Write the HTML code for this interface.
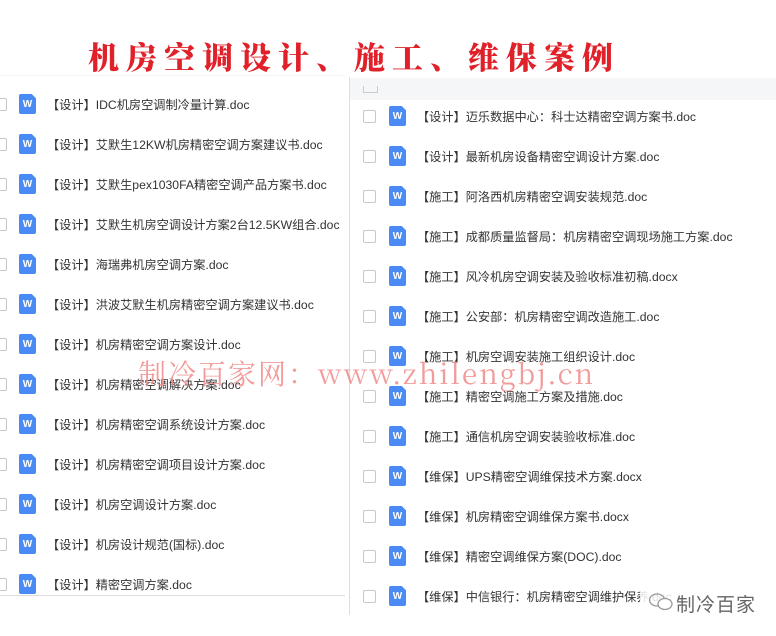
<!DOCTYPE html>
<html><head><meta charset="utf-8"><style>
body{margin:0;width:776px;height:636px;background:#fff;position:relative;overflow:hidden;font-family:"Liberation Sans","Noto Sans CJK SC",sans-serif;}
.title{position:absolute;left:88px;top:33px;font-family:"Noto Serif CJK SC","Liberation Serif",serif;font-weight:900;font-size:31px;color:#e0212a;letter-spacing:7px;white-space:nowrap;}
.row{position:absolute;height:24px;display:flex;align-items:center;font-size:12.2px;color:#333;white-space:nowrap;}
.cb{width:13px;height:13px;border:1px solid #c8c8c8;border-radius:2px;background:#fff;box-sizing:border-box;}
.ic{width:17px;height:20px;background:#4a8af4;border-radius:2px;color:#fff;font-size:10px;font-weight:bold;display:flex;align-items:center;justify-content:center;clip-path:polygon(0 0,75% 0,100% 22%,100% 100%,0 100%);}
.tx{margin-left:11px;}
.l .cb{margin-left:-6px;}
.l .ic{margin-left:12px;}
.r .ic{margin-left:13px;}
.rp{position:absolute;left:349px;top:77px;width:427px;height:538px;border-left:1px solid #ddd;}
.hd{position:absolute;left:350px;top:78px;width:426px;height:22px;background:#f5f6f8;}
.wm{position:absolute;left:138px;top:353px;font-family:"Noto Serif CJK SC","Liberation Serif",serif;font-size:28px;color:#f08a8a;opacity:.85;white-space:nowrap;letter-spacing:2px;}
</style></head><body>
<div class="title">机房空调设计、施工、维保案例</div>
<div class="rp"></div><div class="hd"></div>
<div style="position:absolute;left:363px;top:86px;width:13px;height:6px;border:1px solid #ccc;border-top:none"></div>
<div style="position:absolute;left:0;top:595px;width:345px;height:1px;background:#ddd"></div>
<div style="position:absolute;left:0;top:75px;width:345px;height:1px;background:#f3f3f3"></div>

<div class="row l" style="left:0;top:92px"><div class="cb"></div><div class="ic">W</div><span class="tx">【设计】IDC机房空调制冷量计算.doc</span></div>
<div class="row l" style="left:0;top:132px"><div class="cb"></div><div class="ic">W</div><span class="tx">【设计】艾默生12KW机房精密空调方案建议书.doc</span></div>
<div class="row l" style="left:0;top:172px"><div class="cb"></div><div class="ic">W</div><span class="tx">【设计】艾默生pex1030FA精密空调产品方案书.doc</span></div>
<div class="row l" style="left:0;top:212px"><div class="cb"></div><div class="ic">W</div><span class="tx">【设计】艾默生机房空调设计方案2台12.5KW组合.doc</span></div>
<div class="row l" style="left:0;top:252px"><div class="cb"></div><div class="ic">W</div><span class="tx">【设计】海瑞弗机房空调方案.doc</span></div>
<div class="row l" style="left:0;top:292px"><div class="cb"></div><div class="ic">W</div><span class="tx">【设计】洪波艾默生机房精密空调方案建议书.doc</span></div>
<div class="row l" style="left:0;top:332px"><div class="cb"></div><div class="ic">W</div><span class="tx">【设计】机房精密空调方案设计.doc</span></div>
<div class="row l" style="left:0;top:372px"><div class="cb"></div><div class="ic">W</div><span class="tx">【设计】机房精密空调解决方案.doc</span></div>
<div class="row l" style="left:0;top:412px"><div class="cb"></div><div class="ic">W</div><span class="tx">【设计】机房精密空调系统设计方案.doc</span></div>
<div class="row l" style="left:0;top:452px"><div class="cb"></div><div class="ic">W</div><span class="tx">【设计】机房精密空调项目设计方案.doc</span></div>
<div class="row l" style="left:0;top:492px"><div class="cb"></div><div class="ic">W</div><span class="tx">【设计】机房空调设计方案.doc</span></div>
<div class="row l" style="left:0;top:532px"><div class="cb"></div><div class="ic">W</div><span class="tx">【设计】机房设计规范(国标).doc</span></div>
<div class="row l" style="left:0;top:572px"><div class="cb"></div><div class="ic">W</div><span class="tx">【设计】精密空调方案.doc</span></div>

<div class="row r" style="left:363px;top:104px"><div class="cb"></div><div class="ic">W</div><span class="tx">【设计】迈乐数据中心：科士达精密空调方案书.doc</span></div>
<div class="row r" style="left:363px;top:144px"><div class="cb"></div><div class="ic">W</div><span class="tx">【设计】最新机房设备精密空调设计方案.doc</span></div>
<div class="row r" style="left:363px;top:184px"><div class="cb"></div><div class="ic">W</div><span class="tx">【施工】阿洛西机房精密空调安装规范.doc</span></div>
<div class="row r" style="left:363px;top:224px"><div class="cb"></div><div class="ic">W</div><span class="tx">【施工】成都质量监督局：机房精密空调现场施工方案.doc</span></div>
<div class="row r" style="left:363px;top:264px"><div class="cb"></div><div class="ic">W</div><span class="tx">【施工】风冷机房空调安装及验收标准初稿.docx</span></div>
<div class="row r" style="left:363px;top:304px"><div class="cb"></div><div class="ic">W</div><span class="tx">【施工】公安部：机房精密空调改造施工.doc</span></div>
<div class="row r" style="left:363px;top:344px"><div class="cb"></div><div class="ic">W</div><span class="tx">【施工】机房空调安装施工组织设计.doc</span></div>
<div class="row r" style="left:363px;top:384px"><div class="cb"></div><div class="ic">W</div><span class="tx">【施工】精密空调施工方案及措施.doc</span></div>
<div class="row r" style="left:363px;top:424px"><div class="cb"></div><div class="ic">W</div><span class="tx">【施工】通信机房空调安装验收标准.doc</span></div>
<div class="row r" style="left:363px;top:464px"><div class="cb"></div><div class="ic">W</div><span class="tx">【维保】UPS精密空调维保技术方案.docx</span></div>
<div class="row r" style="left:363px;top:504px"><div class="cb"></div><div class="ic">W</div><span class="tx">【维保】机房精密空调维保方案书.docx</span></div>
<div class="row r" style="left:363px;top:544px"><div class="cb"></div><div class="ic">W</div><span class="tx">【维保】精密空调维保方案(DOC).doc</span></div>
<div class="row r" style="left:363px;top:584px"><div class="cb"></div><div class="ic">W</div><span class="tx">【维保】中信银行：机房精密空调维护保养.doc</span></div>

<div class="wm">制冷百家网：www.zhilengbj.cn</div>
<div style="position:absolute;left:640px;top:586px;width:100px;height:26px;background:rgba(255,255,255,.85)"></div>
<svg style="position:absolute;left:648px;top:592px" width="26" height="20" viewBox="0 0 26 20"><ellipse cx="9" cy="8" rx="7.5" ry="6" fill="none" stroke="#999" stroke-width="1.3"/><ellipse cx="17" cy="12" rx="7" ry="5.5" fill="#fff" stroke="#999" stroke-width="1.3"/></svg>
<div style="position:absolute;left:676px;top:590px;font-size:19px;color:#666;letter-spacing:1px;white-space:nowrap">制冷百家</div>
</body></html>
